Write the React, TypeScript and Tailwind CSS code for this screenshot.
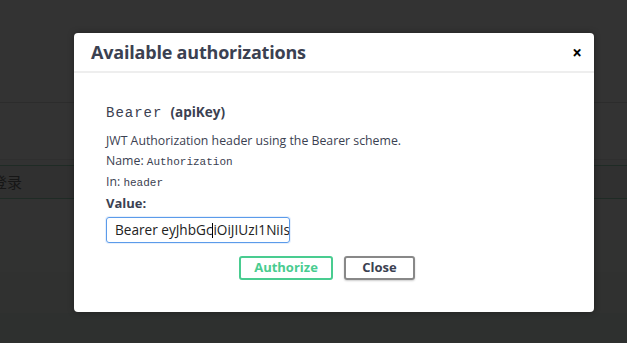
import React from "react";

function Backdrop() {
  return (
    <div className="flex flex-col w-full h-full bg-[#333333]">
      <div className="h-[103px] border-b border-[#2c2c2c]" />
      <div className="h-[57px] border-b border-[#2f2f2f]" />
      <div className="h-[5px] bg-[#323232]" />
      <div className="h-[34px] border-y border-[#1f2b25] bg-[#303030] flex items-center">
        <span className="text-[15px] text-[#161616] -ml-[8px] font-['Noto_Sans_CJK_SC',sans-serif]">登录</span>
      </div>
      <div className="h-[41px] bg-[#323232]" />
      <div className="h-[32px] bg-[#313231]" />
      <div className="h-[41px] bg-[#303130]" />
      <div className="flex-1 bg-[#2e302f]" />
    </div>
  );
}

function AuthModal() {
  return (
    <div className="absolute left-[74px] top-[33px] w-[520px] h-[279px] bg-white rounded-[4px] shadow-[0_0_6px_rgba(0,0,0,0.35)] text-[#3b4151] font-['Open_Sans',sans-serif]">
      <div className="h-[40px] flex items-center justify-between pl-[17px] pr-[12px] border-b-2 border-[#eeeeee]">
        <h3 className="text-[18px] font-bold tracking-[-0.2px] text-[#3b4151]">Available authorizations</h3>
        <span className="text-[17px] font-bold text-black leading-none">×</span>
      </div>
      <div className="pl-[32px] pt-[29px]">
        <div className="flex items-baseline gap-[8px] h-[18px]">
          <span className="font-['Liberation_Mono',monospace] text-[14px] tracking-[1px] text-[#3b4151]">Bearer</span>
          <span className="text-[13.5px] font-bold">(apiKey)</span>
        </div>
        <div className="mt-[11px] text-[12.3px] leading-[20px]">
          <div>JWT Authorization header using the Bearer scheme.</div>
          <div>
            Name: <span className="font-['Liberation_Mono',monospace] text-[11px]">Authorization</span>
          </div>
          <div>
            In: <span className="font-['Liberation_Mono',monospace] text-[11px]">header</span>
          </div>
          <div className="font-bold text-[13px]">Value:</div>
        </div>
        <div className="mt-[4px] w-[184px] h-[26px] border border-[#5b9bea] rounded-[3px] flex items-center pl-[8px] overflow-hidden text-[13.6px] text-[#222] whitespace-nowrap shadow-[0_0_0_1px_rgba(91,155,234,0.15)]">
          <span className="shrink-0">Bearer eyJhbGc</span>
          <span className="shrink-0 inline-block w-px h-[15px] bg-black" />
          <span className="shrink-0">iOiJIUzI1NiIsInR5cCI6IkpXVCJ9</span>
        </div>
        <div className="flex justify-center gap-[11px] mt-[13px] pr-[46px]">
          <button className="w-[94px] h-[24px] border-2 border-[#49cc90] rounded-[3px] text-[#49cc90] text-[13px] font-bold">
            Authorize
          </button>
          <button className="w-[71px] h-[24px] border-2 border-[#888888] rounded-[3px] text-[#3b4151] text-[13px] font-bold shadow-[0_1px_2px_rgba(0,0,0,0.2)]">
            Close
          </button>
        </div>
      </div>
    </div>
  );
}

export default function App() {
  return (
    <div className="relative w-[627px] h-[343px] overflow-hidden">
      <Backdrop />
      <AuthModal />
    </div>
  );
}
